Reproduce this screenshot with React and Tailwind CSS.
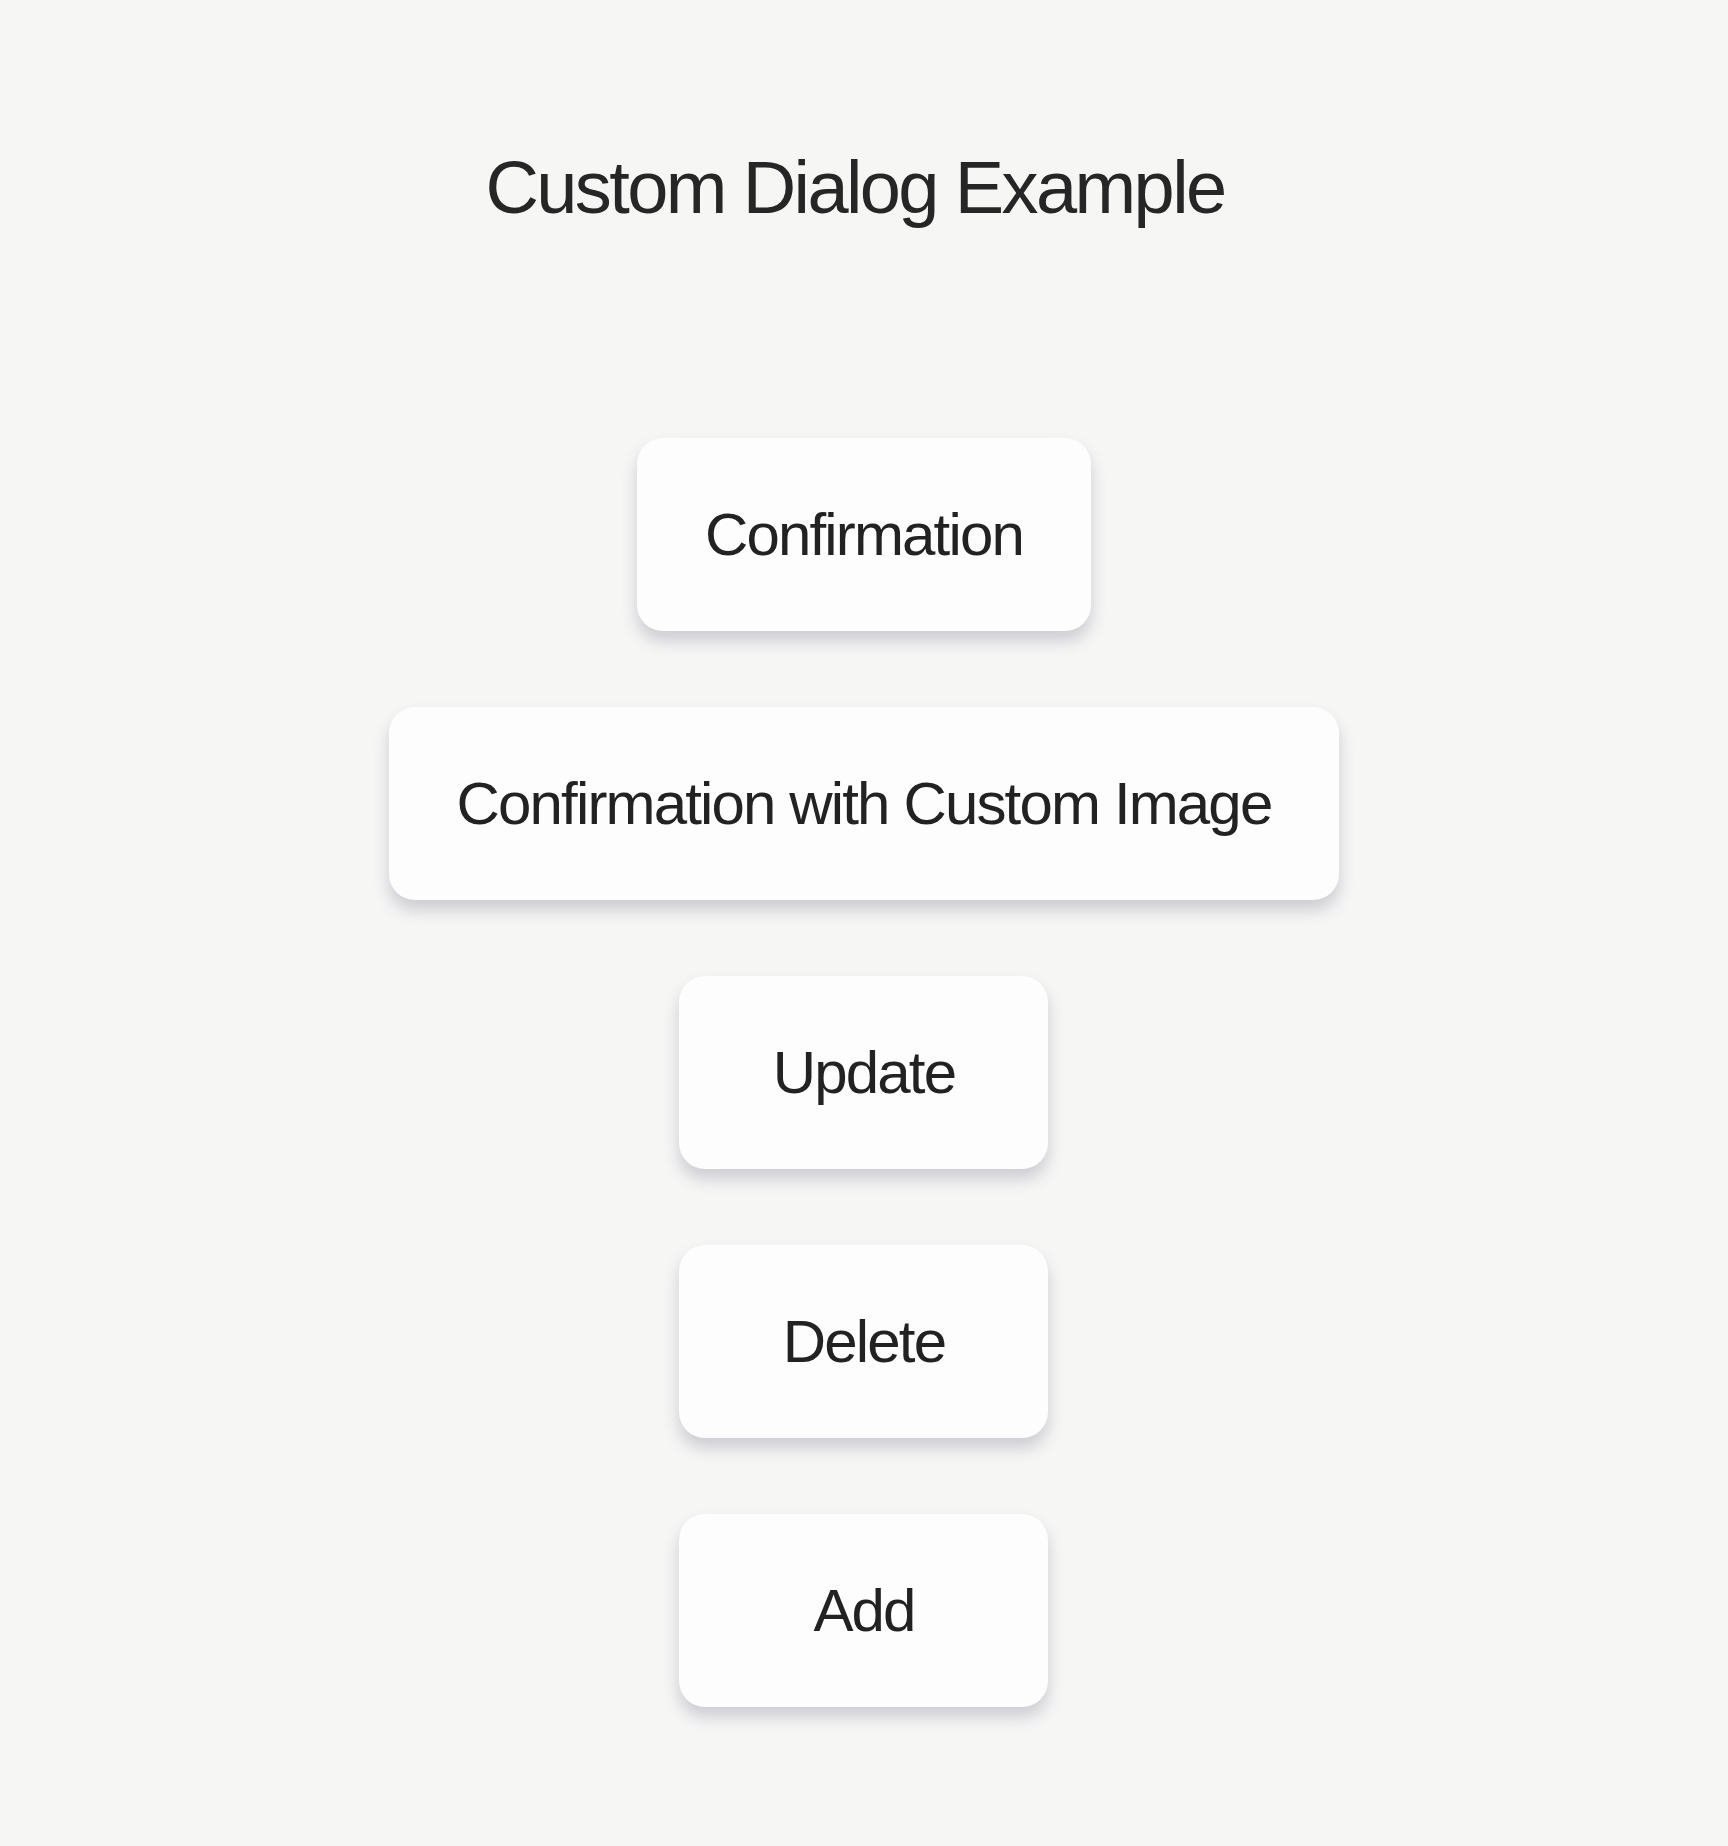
const buttons = [
  "Confirmation",
  "Confirmation with Custom Image",
  "Update",
  "Delete",
  "Add",
];

export default function App() {
  return (
    <div
      className="min-h-[1846px] w-full bg-[#f6f6f5] flex flex-col items-center"
      style={{ fontFamily: '"Liberation Sans", Arial, Helvetica, sans-serif' }}
    >
      <h1 className="mt-[151px] text-[74px] leading-none tracking-[-2.6px] text-[#262626] font-normal -translate-x-[9px]">
        Custom Dialog Example
      </h1>

      <div className="mt-[213px] flex flex-col items-center gap-[76px]">
        {buttons.map((label) => (
          <button
            key={label}
            type="button"
            className="h-[193px] min-w-[369px] px-[68px] flex items-center justify-center rounded-[26px] bg-[#fdfdfd] text-[60px] leading-none tracking-[-1.85px] text-[#222222] shadow-[0_10px_16px_rgba(60,60,90,0.22)]"
          >
            {label}
          </button>
        ))}
      </div>
    </div>
  );
}
